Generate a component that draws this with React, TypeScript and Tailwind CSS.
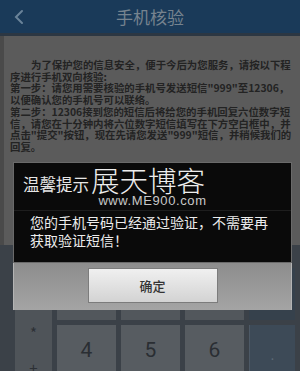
const LINES = [
  "为了保护您的信息安全，便于今后为您服务，请按以下程",
  "序进行手机双向核验:",
  "第一步：请您用需要核验的手机号发送短信\"999\"至12306，",
  "以便确认您的手机号可以联络。",
  "第二步：12306接到您的短信后将给您的手机回复六位数字短",
  "信，请您在十分钟内将六位数字短信填写在下方空白框中，并",
  "点击\"提交\"按钮，现在先请您发送\"999\"短信，并稍候我们的",
  "回复。",
];

const cjk = { fontFamily: '"Noto Sans CJK SC", "Noto Sans", sans-serif' };

export default function App() {
  return (
    <div className="relative h-[371px] w-[300px] overflow-hidden bg-[#3b4148]" style={cjk}>
      {/* Header */}
      <div className="flex h-[33px] items-center bg-[#1a3a59]">
        <div className="flex w-[36px] justify-center pl-[2px]">
          <svg width="12" height="16" viewBox="0 0 12 16" fill="none">
            <path d="M9 2 L3 8 L9 14" stroke="#6a8399" strokeWidth="2" strokeLinecap="round" />
          </svg>
        </div>
        <div className="flex-1 text-center text-[17px] leading-none text-[#76838f]">手机核验</div>
        <div className="w-[36px]" />
      </div>
      <div className="h-[3px] bg-[#2c3743]" />

      {/* Content */}
      <div className="h-[209px] border-l-[4px] border-[#4a4a4a] bg-[#5b5b5b] pl-[6px] pt-[23px]">
        {LINES.map((line, i) => (
          <div
            key={i}
            className={`whitespace-nowrap text-[10.4px] font-semibold leading-[11.7px] text-[#232323] ${i === 0 ? "pl-[21px]" : ""}`}
          >
            {line}
          </div>
        ))}
      </div>

      {/* Keypad */}
      <div className="grid h-[126px] grid-cols-[37px_59px_59px_59px_46px] grid-rows-[52px_52px] gap-x-[5px] gap-y-[5px] pl-[15px] pt-[23px]">
        <div className="row-span-2 flex flex-col items-center bg-[#4f5459] pt-[57px] text-[15px] leading-none text-[#2c3035]">
          <span>*</span>
          <span className="mt-[20px]">+</span>
        </div>
        <div className="bg-[#52575c]" />
        <div className="bg-[#52575c]" />
        <div className="bg-[#52575c]" />
        <div className="bg-[#36414c]" />
        {["4", "5", "6"].map((d) => (
          <div
            key={d}
            className="flex items-start justify-center bg-[#575c61] pt-[15px] text-[21px] leading-none text-[#2a2e33]"
            style={{ fontFamily: '"Roboto", "Liberation Sans", sans-serif' }}
          >
            {d}
          </div>
        ))}
        <div className="flex justify-center border-l border-[#4d5966] bg-[#3d4a57] pt-[24px] text-[12px] leading-none text-[#5d6b78]">
          .
        </div>
      </div>

      {/* Dialog */}
      <div className="absolute left-[13px] top-[162px] w-[279px]">
        <div className="h-[101px] border border-[#6a6a6a] bg-[#0a0a0a]">
          <div className="flex h-[31px] items-end pl-[9px]">
            <span className="pb-[2px] text-[16.5px] leading-none text-[#e6e6e6]">温馨提示</span>
            <span className="ml-[2px] text-[28.5px] font-extralight leading-none text-[#eeeeee]">展天博客</span>
          </div>
          <div
            className="text-center text-[13px] leading-[13px] tracking-[0.6px] text-[#c8c8c8]"
            style={{ fontFamily: '"Liberation Sans", Arial, sans-serif' }}
          >
            www.ME900.com
          </div>
          <div className="mt-[3px] h-px bg-[#1e1e1e]" />
          <div className="pl-[16px] pt-[2px] text-[14px] leading-[18px] text-[#ececec]">
            <div className="whitespace-nowrap">您的手机号码已经通过验证，不需要再</div>
            <div className="whitespace-nowrap">获取验证短信！</div>
          </div>
        </div>
        <div className="flex h-[47px] justify-center border-x border-[#b4b4b4] bg-gradient-to-b from-[#8d8d8d] to-[#a4a4a4] pt-[5px]">
          <div className="flex h-[35px] w-[130px] items-center justify-center border border-[#7c7c7c] bg-gradient-to-b from-[#f0f0f0] to-[#d3d3d3] text-[13px] font-medium text-[#333333]">
            确定
          </div>
        </div>
      </div>
    </div>
  );
}
